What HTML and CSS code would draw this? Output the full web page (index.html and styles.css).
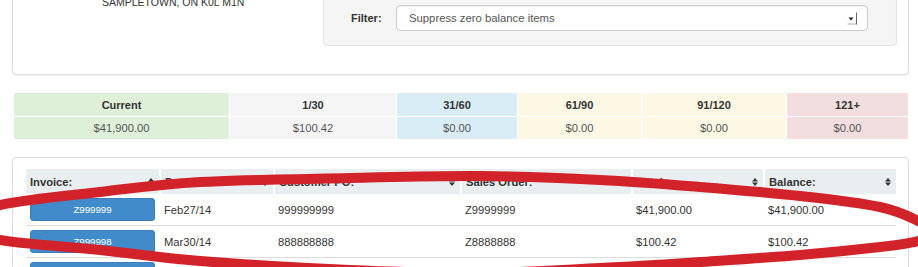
FILE: index.html
```html
<!DOCTYPE html>
<html lang="en">
<head>
<meta charset="utf-8">
<title>Customer Statement</title>
<link rel="stylesheet" href="styles.css">
</head>
<body>
<div class="page">
  <div class="panel top-panel">
    <div class="address">
      <div class="addr-line">SAMPLETOWN, ON K0L M1N</div>
    </div>
    <div class="well">
      <label class="filter-label">Filter:</label>
      <div class="select">
        <span class="select-text">Suppress zero balance items</span>
        <svg class="select-arrow" width="10" height="13" viewBox="0 0 10 13">
          <polygon points="1.5,5.5 6.5,5.5 4,8.5" fill="#222"/>
          <line x1="9.5" y1="0.5" x2="9.5" y2="12.5" stroke="#666" stroke-width="1"/>
          <line x1="0.5" y1="12" x2="9.5" y2="12" stroke="#aaa" stroke-width="1"/>
        </svg>
      </div>
    </div>
  </div>

  <table class="aging">
    <colgroup>
      <col class="c216"><col class="c167"><col class="c121"><col class="c124"><col class="c145"><col class="c122">
    </colgroup>
    <thead>
      <tr>
        <th class="success">Current</th>
        <th class="active">1/30</th>
        <th class="info">31/60</th>
        <th class="warning">61/90</th>
        <th class="warning">91/120</th>
        <th class="danger">121+</th>
      </tr>
    </thead>
    <tbody>
      <tr>
        <td class="success">$41,900.00</td>
        <td class="active">$100.42</td>
        <td class="info">$0.00</td>
        <td class="warning">$0.00</td>
        <td class="warning">$0.00</td>
        <td class="danger">$0.00</td>
      </tr>
    </tbody>
  </table>

  <div class="panel list-panel">
    <table class="invoices">
      <colgroup>
        <col class="w134"><col class="w114"><col class="w187"><col class="w171"><col class="w132"><col class="w132">
      </colgroup>
      <thead>
        <tr>
          <th><div class="th-inner"><span>Invoice:</span><svg class="sort" width="6" height="8" viewBox="0 0 6 8"><polygon points="0,3.5 3,0 6,3.5"/><polygon points="0,4.5 3,8 6,4.5"/></svg></div></th>
          <th><div class="th-inner"><span>Date:</span><svg class="sort" width="6" height="8" viewBox="0 0 6 8"><polygon points="0,3.5 3,0 6,3.5"/><polygon points="0,4.5 3,8 6,4.5"/></svg></div></th>
          <th><div class="th-inner"><span>Customer PO:</span><svg class="sort" width="6" height="8" viewBox="0 0 6 8"><polygon points="0,3.5 3,0 6,3.5"/><polygon points="0,4.5 3,8 6,4.5"/></svg></div></th>
          <th><div class="th-inner"><span>Sales Order:</span><svg class="sort" width="6" height="8" viewBox="0 0 6 8"><polygon points="0,3.5 3,0 6,3.5"/><polygon points="0,4.5 3,8 6,4.5"/></svg></div></th>
          <th><div class="th-inner"><span>Total:</span><svg class="sort" width="6" height="8" viewBox="0 0 6 8"><polygon points="0,3.5 3,0 6,3.5"/><polygon points="0,4.5 3,8 6,4.5"/></svg></div></th>
          <th><div class="th-inner"><span>Balance:</span><svg class="sort" width="6" height="8" viewBox="0 0 6 8"><polygon points="0,3.5 3,0 6,3.5"/><polygon points="0,4.5 3,8 6,4.5"/></svg></div></th>
        </tr>
      </thead>
      <tbody>
        <tr>
          <td><a class="btn">Z999999</a></td>
          <td>Feb27/14</td>
          <td>999999999</td>
          <td>Z9999999</td>
          <td>$41,900.00</td>
          <td>$41,900.00</td>
        </tr>
        <tr>
          <td><a class="btn">Z999998</a></td>
          <td>Mar30/14</td>
          <td>888888888</td>
          <td>Z8888888</td>
          <td>$100.42</td>
          <td>$100.42</td>
        </tr>
        <tr>
          <td><a class="btn">Z999997</a></td>
          <td>Apr15/14</td>
          <td>777777777</td>
          <td>Z7777777</td>
          <td>$0.00</td>
          <td>$0.00</td>
        </tr>
      </tbody>
    </table>
  </div>
</div>

<svg class="annotation" width="918" height="267" viewBox="0 0 918 267">
  <path d="M0,205 C23.3,199.7 66.7,195.8 100,192 C133.3,188.2 158.3,184.3 200,182 C241.7,179.7 303.3,179 350,178 C396.7,177 438.3,175.7 480,176 C521.7,176.3 563.3,178.2 600,180 C636.7,181.8 666.7,184.3 700,187 C733.3,189.7 770,192.7 800,196 C830,199.3 860.3,202.8 880,207 C899.7,211.2 909.3,216.8 918,221 C926.7,225.2 932,228.7 932,232 C932,235.3 926.7,238.5 918,241 C909.3,243.5 899.7,244.7 880,247 C860.3,249.3 830,252.5 800,255 C770,257.5 733.3,259.8 700,262 C666.7,264.2 636.7,266.2 600,268 C563.3,269.8 521.7,272.7 480,273 C438.3,273.3 396.7,272 350,270 C303.3,268 241.7,264.3 200,261 C158.3,257.7 133.3,253.5 100,250 C66.7,246.5 23.3,244.3 0,240 C-23.3,235.7 -40,229.8 -40,224 C-40,218.2 -23.3,210.3 0,205 Z" fill="none" stroke="#d2222a" stroke-width="10" stroke-linejoin="round"/>
</svg>
</body>
</html>
```

FILE: styles.css
```css
html, body {
  margin: 0;
  padding: 0;
}

body {
  font-family: "Liberation Sans", Arial, Helvetica, sans-serif;
  font-size: 11.2px;
  color: #333;
  background: #fff;
  overflow: hidden;
}

.page {
  width: 897px;
  margin: -40px 0 0 12px;
}

.panel {
  border: 1px solid #ddd;
  border-radius: 4px;
  background: #fff;
  box-shadow: 0 1px 1px rgba(0, 0, 0, 0.05);
}

/* top panel */
.top-panel {
  display: flex;
  padding: 15px 11px 28px 0;
}

.address {
  width: 310px;
  box-sizing: border-box;
  padding: 19px 0 0 89px;
  font-size: 10.5px;
  line-height: 15px;
  color: #333;
}

.well {
  flex: 1;
  display: flex;
  align-items: center;
  background: #f5f5f5;
  border: 1px solid #e3e3e3;
  border-radius: 4px;
  padding: 28px 28px 14px 27px;
  box-shadow: inset 0 1px 1px rgba(0, 0, 0, 0.05);
}

.filter-label {
  width: 45px;
  flex: none;
  font-weight: bold;
  font-size: 11px;
  color: #333;
}

.select {
  flex: 1;
  height: 26px;
  box-sizing: border-box;
  display: flex;
  align-items: center;
  justify-content: space-between;
  padding: 0 10px 0 12px;
  background: #fff;
  border: 1px solid #ccc;
  border-radius: 4px;
  box-shadow: inset 0 1px 1px rgba(0, 0, 0, 0.075);
}

.select-text {
  font-size: 11.3px;
  color: #555;
}

.select-arrow {
  display: block;
}

/* aging summary */
.aging {
  width: 895px;
  margin: 17px 1px;
  border-collapse: collapse;
  table-layout: fixed;
  text-align: center;
}

.c216 { width: 216px; }
.c167 { width: 167px; }
.c121 { width: 121px; }
.c124 { width: 124px; }
.c145 { width: 145px; }
.c122 { width: 122px; }

.aging th,
.aging td {
  border: 1px solid #fff;
  padding: 0;
}

.aging th {
  height: 23px;
  font-weight: bold;
  font-size: 11px;
  color: #333;
}

.aging td {
  height: 22px;
  color: #555;
}

.success { background: #dff0d8; }
.active { background: #f5f5f5; }
.info { background: #d9edf7; }
.warning { background: #fcf8e3; }
.danger { background: #f2dede; }

/* invoice list */
.list-panel {
  padding: 11px 12px 20px 13px;
}

.invoices {
  width: 870px;
  border-collapse: collapse;
  table-layout: fixed;
}

.w134 { width: 134px; }
.w114 { width: 114px; }
.w187 { width: 187px; }
.w171 { width: 171px; }
.w132 { width: 132px; }

.invoices th {
  height: 25px;
  padding: 0 5px 0 4px;
  background: #e9eff0;
  border-right: 2px solid #fff;
  text-align: left;
  font-weight: bold;
  color: #333;
}

.invoices th:last-child {
  border-right: 0;
}

.th-inner {
  display: flex;
  align-items: center;
  justify-content: space-between;
}

.sort {
  display: block;
  fill: #333;
}

.invoices td {
  height: 31px;
  padding: 0 4px;
  border-bottom: 1px solid #ddd;
  vertical-align: middle;
  color: #333;
}

.btn {
  display: block;
  width: 125px;
  height: 23px;
  box-sizing: border-box;
  line-height: 21px;
  text-align: center;
  font-size: 9.7px;
  color: #fff;
  background: #428bca;
  border: 1px solid #3b7fbd;
  border-radius: 3px;
}

/* hand-drawn annotation over the page */
.annotation {
  position: fixed;
  top: 0;
  left: 0;
  pointer-events: none;
}
```
